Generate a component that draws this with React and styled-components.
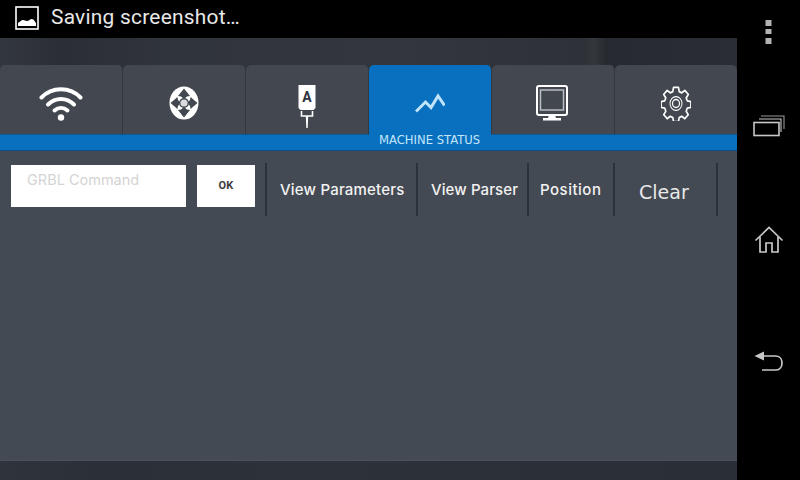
import React from "react";
import styled, { createGlobalStyle } from "styled-components";

const Global = createGlobalStyle`
  html, body { margin: 0; padding: 0; background: #000; }
  #root { width: 800px; height: 480px; overflow: hidden; }
  * { box-sizing: border-box; }
`;

const Screen = styled.div`
  width: 800px;
  height: 480px;
  display: grid;
  grid-template-columns: 737px 63px;
  grid-template-rows: 38px 442px;
  background: #000;
`;

const StatusBar = styled.div`
  grid-column: 1 / 2;
  display: flex;
  align-items: center;
  gap: 12px;
  padding: 0 0 3px 15px;
  color: #e8e8e8;
  font: 400 20.9px/1 Roboto, "Liberation Sans", sans-serif;
  letter-spacing: 0.25px;
`;

const NavBar = styled.div`
  grid-column: 2;
  grid-row: 1 / 3;
  display: flex;
  flex-direction: column;
  align-items: center;
  padding: 19px 0 0 0;
  color: #c4c4c4;
`;

const NavSlot = styled.div`
  display: flex;
  justify-content: center;
  width: 100%;
  height: ${(p) => p.$h}px;
`;

const Workspace = styled.div`
  grid-column: 1;
  grid-row: 2;
  display: flex;
  flex-direction: column;
  background: linear-gradient(90deg, #33373e 0, #2b2e35 60px, #30343b 170px, #33373d 400px, #2e3238 585px, #34373c 594px, #272a30 606px, #2a2d33 737px);
`;

const Tabs = styled.div`
  margin-top: 27px;
  height: 70px;
  display: grid;
  grid-template-columns: 123px 123px 123px 123px 123px 122px;
`;

const Tab = styled.div`
  display: flex;
  align-items: center;
  justify-content: center;
  padding-top: 7px;
  border-radius: 5px 5px 0 0;
  background: ${(p) => (p.$active ? "#0870be" : "#434850")};
  border-right: 1px solid #33373e;
  border-bottom: 1px solid ${(p) => (p.$active ? "#0870be" : "#0b5a96")};
  color: ${(p) => (p.$active ? "#bfe4fb" : "#fff")};
  &:last-child { border-right: 0; }
`;

const BlueBar = styled.div`
  height: 16px;
  background: #0870be;
  border-bottom: 1px solid #0c4f84;
  color: #c4e6fb;
  font: 400 11.6px/11px "DejaVu Sans", Verdana, sans-serif;
  display: flex;
  padding-left: 379px;
`;

const Panel = styled.div`
  height: 309px;
  background: #444a53;
  padding: 12px 0 0 11px;
  display: flex;
  align-items: flex-start;
`;

const CommandBox = styled.div`
  width: 175px;
  height: 42px;
  margin-top: 2px;
  padding: 6px 0 0 16px;
  background: #fff;
  color: #d4d4d4;
  font: 400 14.5px/18px Inter, Roboto, sans-serif;
`;

const OkButton = styled.div`
  width: 58px;
  height: 42px;
  margin: 2px 0 0 11px;
  padding-bottom: 2px;
  background: #fff;
  color: #3d3d3d;
  display: flex;
  align-items: center;
  justify-content: center;
  font: 700 11px/1 Roboto, sans-serif;
  letter-spacing: 0.2px;
`;

const ActionGroup = styled.div`
  display: flex;
  margin-left: 10px;
  border-right: 2px solid #2c323c;
  height: 53px;
`;

const Action = styled.div`
  width: ${(p) => p.$w}px;
  height: 53px;
  border-left: 2px solid #2c323c;
  padding-left: ${(p) => p.$pl}px;
  padding-bottom: 1px;
  display: flex;
  align-items: center;
  color: #f2f2f2;
  font: 500 15px/1 Inter, Roboto, sans-serif;
  letter-spacing: ${(p) => p.$ls || 0}px;
  white-space: nowrap;
`;

const ClearAction = styled(Action)`
  font: 400 19px/1 "DejaVu Sans", Verdana, sans-serif;
  color: #e8e8e8;
  padding-bottom: 0;
  padding-top: 6px;
`;

const MonitorSlot = styled.div`
  display: flex;
  margin-right: 2px;
`;

const ToolSlot = styled.div`
  display: flex;
  margin-top: 7px;
`;

const ImageIcon = () => (
  <svg width="24" height="24" viewBox="0 0 24 24">
    <rect x="1" y="1" width="22" height="22" fill="none" stroke="#fff" strokeWidth="1.6" />
    <path d="M3 20v-3c2-1 3-3 5-3s2 1 4 1 3-2 5-2 3 3 4 4v3z" fill="#fff" />
  </svg>
);

const MoreIcon = () => (
  <svg width="8" height="26" viewBox="0 0 8 26">
    <rect x="0.5" y="1" width="6" height="6" fill="#b4b4b4" />
    <rect x="0.5" y="10" width="6" height="5" fill="#b4b4b4" />
    <rect x="0.5" y="19" width="6" height="6" fill="#b4b4b4" />
  </svg>
);

const RecentIcon = () => (
  <svg width="32" height="22" viewBox="0 0 32 22" fill="none" stroke="#c8c8c8" strokeWidth="1.6" style={{ marginTop: 2 }}>
    <rect x="1" y="7.5" width="25" height="13" />
    <path d="M6 4h22v13" strokeWidth="1.1" />
    <path d="M8 1h23v13" strokeWidth="1.1" stroke="#999" />
  </svg>
);

const HomeIcon = () => (
  <svg width="30" height="28" viewBox="0 0 30 28" fill="none" stroke="#c8c8c8" strokeWidth="1.7">
    <path d="M1.5 14.5 15 1.5l13.5 13" />
    <path d="M6 11v15h6v-9h6v9h6V11" />
  </svg>
);

const BackIcon = () => (
  <svg width="30" height="22" viewBox="0 0 30 22" fill="none" stroke="#c8c8c8" strokeWidth="1.7">
    <path d="M0.5 6 10 1.5v9z" fill="#c8c8c8" stroke="none" />
    <path d="M9 6h13c8 0 8 14 0 14H8" />
  </svg>
);

const WifiIcon = () => (
  <svg width="44" height="36" viewBox="0 0 44 36" fill="none" stroke="#fff" strokeWidth="4" strokeLinecap="round">
    <path d="M2.5 12.5C13 1.5 31 1.5 41.5 12.5" />
    <path d="M9 19.5c7.5-7.5 18.5-7.5 26 0" />
    <path d="M15.5 25.5c4-3.5 9-3.5 13 0" />
    <circle cx="22" cy="32.5" r="3.2" fill="#fff" stroke="none" />
  </svg>
);

const JogIcon = () => (
  <svg width="30" height="34" viewBox="0 0 30 34">
    <ellipse cx="15" cy="17" rx="14.5" ry="16.5" fill="#fff" />
    <g fill="#434850">
      <path d="M15 2.5l6 7.5-3 .5-3 2.5-3-2.5-3-.5z" />
      <path d="M15 31.5l6-7.500-3-.5-3-2.500-3 2.500-3 .5z" />
      <path d="M1.500 17l7-6 .5 3 2.500 3-2.500 3-.5 3z" />
      <path d="M28.500 17l-7-6-.5 3-2.500 3 2.500 3 .5 3z" />
      <circle cx="15" cy="17" r="5" />
    </g>
    <circle cx="15" cy="17" r="3.6" fill="#d8dade" />
  </svg>
);

const ToolIcon = () => (
  <svg width="18" height="44" viewBox="0 0 18 44">
    <path d="M0.5 0h17v23l-2 2H2.500l-2-2z" fill="#fff" />
    <text x="9" y="17" textAnchor="middle" fill="#2f333a" fontFamily="Roboto, sans-serif" fontWeight="700" fontSize="14">A</text>
    <path d="M3.500 26v5h11v-5" fill="none" stroke="#fff" strokeWidth="1.6" />
    <path d="M7.800 31h2.400l-.5 12h-1.400z" fill="#fff" />
  </svg>
);

const GraphIcon = () => (
  <svg width="30" height="20" viewBox="0 0 30 20" fill="none" stroke="currentColor" strokeWidth="3">
    <path d="M1 18.500 10.500 9l5.500 5.500L23 3l6.500 9.500" />
  </svg>
);

const MonitorIcon = () => (
  <svg width="32" height="36" viewBox="0 0 32 36">
    <rect x="1" y="1" width="30" height="29" rx="2" fill="none" stroke="#fff" strokeWidth="2" />
    <rect x="4.500" y="5" width="23" height="20" fill="none" stroke="#b9bcc0" strokeWidth="1.5" />
    <path d="M13 30h6l1 3h5v2.500H7V33h5z" fill="#fff" />
  </svg>
);

const GearIcon = () => (
  <svg width="30" height="35" viewBox="-15 -17.5 30 35" fill="none" stroke="#fff">
    <g transform="scale(1 1.15)">
      <path
        strokeWidth="1.6"
        strokeLinejoin="round"
        d="M-2.500-14h5l.7 3.600 2.600 1.100 3-2.100 3.500 3.500-2.100 3 1.100 2.600 3.600.7v5l-3.600.7-1.100 2.600 2.100 3-3.500 3.500-3-2.100-2.600 1.100-.7 3.600h-5l-.7-3.600-2.600-1.100-3 2.100-3.500-3.500 2.100-3-1.100-2.600-3.600-.7v-5l3.600-.7 1.100-2.600-2.100-3 3.500-3.500 3 2.100 2.600-1.100z"
      />
      <circle r="6" strokeWidth="1" />
      <circle r="3.500" strokeWidth="1.2" />
    </g>
  </svg>
);

const Footer = styled.div`
  flex: 1;
  border-top: 1px solid #4b5059;
  background: linear-gradient(90deg, #2f333b 0, #2b2f38 100px, #2d313a 300px, #2a2e36 737px);
`;

export default function App() {
  return (
    <Screen>
      <Global />
      <StatusBar>
        <ImageIcon />
        <span>Saving screenshot…</span>
      </StatusBar>
      <NavBar>
        <NavSlot $h={94}><MoreIcon /></NavSlot>
        <NavSlot $h={113}><RecentIcon /></NavSlot>
        <NavSlot $h={124}><HomeIcon /></NavSlot>
        <NavSlot $h={30}><BackIcon /></NavSlot>
      </NavBar>
      <Workspace>
        <Tabs>
          <Tab><WifiIcon /></Tab>
          <Tab><JogIcon /></Tab>
          <Tab><ToolSlot><ToolIcon /></ToolSlot></Tab>
          <Tab $active><GraphIcon /></Tab>
          <Tab><MonitorSlot><MonitorIcon /></MonitorSlot></Tab>
          <Tab><GearIcon /></Tab>
        </Tabs>
        <BlueBar>MACHINE STATUS</BlueBar>
        <Panel>
          <CommandBox>GRBL Command</CommandBox>
          <OkButton>OK</OkButton>
          <ActionGroup>
            <Action $w={151} $pl={13} $ls={0.2}>View Parameters</Action>
            <Action $w={111} $pl={13} $ls={0.1}>View Parser</Action>
            <Action $w={86} $pl={11} $ls={0.5}>Position</Action>
            <ClearAction $w={103} $pl={24}>Clear</ClearAction>
          </ActionGroup>
        </Panel>
        <Footer />
      </Workspace>
    </Screen>
  );
}
